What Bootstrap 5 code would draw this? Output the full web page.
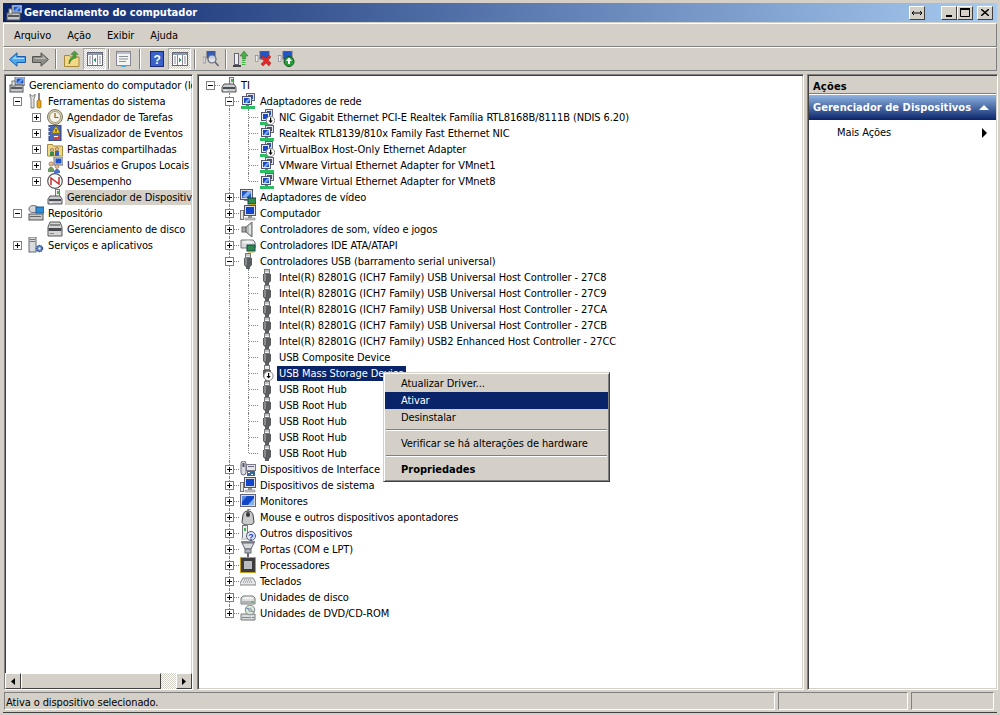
<!DOCTYPE html>
<html lang="pt-BR">
<head>
  <meta charset="UTF-8">
  <title>Gerenciamento do computador</title>
  <link href="https://cdn.jsdelivr.net/npm/bootstrap@5.3.3/dist/css/bootstrap.min.css" rel="stylesheet">
  <style>
    html, body { height: 715px; overflow: hidden; }
    body { background: #d4d0c8; color: #000; font: 11px/16px "DejaVu Sans", "Liberation Sans", sans-serif; font-stretch: condensed; letter-spacing: -.1px; }
    .win { width: 1000px; height: 715px; border: 3px solid #d4d0c8; border-bottom-width: 2px; box-shadow: inset 0 -1px 0 #404040; position: relative; }
    .titlebar { height: 19px; background: linear-gradient(90deg, #0a246a, #a6caf0); color: #fff; font-weight: 700; padding-left: 3px; letter-spacing: 0; }
    .titlebar svg.ic { margin-right: 2px; }
    .titlebar span { padding-top: 1px; }
    .cap { width: 16px; height: 14px; background: #d4d0c8; border: 1px solid; border-color: #fff #404040 #404040 #fff; padding: 0; display: flex; align-items: center; justify-content: center; }
    .bar { border: 1px solid; border-color: #fff #808080 #808080 #fff; }
    .menubar { height: 24px; margin-top: 1px; padding: 2px 0 0 5px; }
    .menubar span { padding: 0 5px; margin-right: 6px; }
    .toolbar { height: 24px; padding-left: 2px; }
    .tb { width: 23px; height: 22px; flex: none; display: flex; align-items: center; justify-content: center; }
    .tb.on { background: repeating-conic-gradient(#fff 0 25%, #d4d0c8 0 50%) 0 0 / 2px 2px; border: 1px solid; border-color: #a8a8a0 #fff #fff #a8a8a0; }
    .tsep { flex: none; display: flex; justify-content: center; }
    .tsep::before { content: ""; width: 2px; height: 20px; border-left: 1px solid #808080; border-right: 1px solid #fff; }
    .panes { margin-top: 3px; padding: 0 0 1px 1px; min-height: 0; }
    .pane { background: #fff; border: 1px solid; border-color: #808080 #fff #fff #808080; box-shadow: inset 1px 1px 0 #404040, inset -1px -1px 0 #d4d0c8; overflow: hidden; flex: none; }
    .p-left { width: 189px; margin-right: 4px; }
    .p-mid { width: 607px; margin-right: 3px; }
    .p-right { width: 191px; }
    .tree { padding: 2px 0 0 3px; overflow: hidden; min-height: 0; }
    .row-t { height: 16px; display: flex; align-items: center; white-space: nowrap; }
    .row-t svg.ic { margin-left: 1px; }
    .row-t span.tx { flex: none; margin-left: 2px; padding: 0 2px; height: 15px; line-height: 15px; }
    .row-t .sel { background: #0a246a; color: #fff; }
    .row-t .gray { background: #d4d0c8; flex: 1 0 auto; }
    .g { width: 19px; height: 16px; flex: none; position: relative; }
    .g.v::before, .g.t::before { content: ""; position: absolute; left: 9px; top: 0; bottom: 0; border-left: 1px dotted #808080; }
    .g.l::before { content: ""; position: absolute; left: 9px; top: 0; height: 8px; border-left: 1px dotted #808080; }
    .g.t::after, .g.l::after, .g.h::after { content: ""; position: absolute; left: 10px; right: 0; top: 8px; border-top: 1px dotted #808080; }
    .box { position: absolute; left: 5px; top: 4px; width: 9px; height: 9px; background: #fff; border: 1px solid #808080; z-index: 1; }
    .box::before { content: ""; position: absolute; left: 1px; top: 3px; width: 5px; height: 1px; background: #000; }
    .box.plus::after { content: ""; position: absolute; left: 3px; top: 1px; width: 1px; height: 5px; background: #000; }
    .hscroll { height: 16px; flex: none; background: #d4d0c8; }
    .sb { width: 16px; height: 16px; flex: none; background: #d4d0c8; border: 1px solid; border-color: #fff #404040 #404040 #fff; display: flex; align-items: center; justify-content: center; }
    .thumb { width: 140px; flex: none; border: 1px solid; border-color: #fff #404040 #404040 #fff; }
    .track { background: repeating-conic-gradient(#fff 0 25%, #d4d0c8 0 50%) 0 0 / 2px 2px; }
    .act-head { height: 18px; flex: none; background: #d4d0c8; font-weight: 700; padding: 3px 0 0 4px; line-height: 15px; border-bottom: 1px solid #808080; margin: 1px 1px 0 1px; letter-spacing: .2px; }
    .act-band { height: 25px; flex: none; margin: 1px 1px 0 1px; background: linear-gradient(#8fb4e2, #0a246a); color: #fff; font-weight: 700; padding: 0 7px 0 4px; letter-spacing: .05px; }
    .act-item { height: 24px; padding: 2px 10px 0 29px; }
    .tri-u { width: 0; height: 0; border: 5px solid transparent; border-top: 0; border-bottom-color: #fff; }
    .tri-r { width: 0; height: 0; border: 5px solid transparent; border-right: 0; border-left-color: #000; }
    .statusbar { height: 22px; padding: 1px 0 3px 1px; gap: 3px; }
    .cell { border: 1px solid; border-color: #808080 #fff #fff #808080; padding: 1px 0 0 1px; line-height: 18px; flex: none; }
    .ctx.dropdown-menu { left: 380px; top: 369px; width: 227px; min-width: 0; padding: 2px 1px 3px; margin: 0; font-size: 11px; color: #000; background: #d4d0c8; border: 1px solid; border-color: #d4d0c8 #404040 #404040 #d4d0c8; border-radius: 0; box-shadow: inset 1px 1px 0 #fff, inset -1px -1px 0 #808080; }
    .ctx .dropdown-item { height: 17px; padding: 1px 0 0 16px; line-height: 16px; color: #000; background: none; }
    .ctx .dropdown-item.active { background: #0a246a; color: #fff; }
    .ctx .dropdown-item.fw-bold { letter-spacing: 0; }
    .ctx .dropdown-divider { margin: 3px 1px 4px; height: 2px; border: 0; border-top: 1px solid #808080; border-bottom: 1px solid #fff; opacity: 1; }
  </style>
</head>
<body>

<svg class="d-none" xmlns="http://www.w3.org/2000/svg">
  <symbol id="mgmt" viewBox="0 0 16 16"><rect x="6" y="0" width="10" height="8" fill="#dfe3ea" stroke="#667"/><rect x="7.500" y="1.500" width="7" height="5" fill="#1f55c8"/><path d="M8 6l5-5h1v2l-3 3z" fill="#6aa0ee"/><rect x="1" y="8" width="13" height="7" fill="#c4c7c8" stroke="#555"/><rect x="2" y="10" width="11" height="2" fill="#55585a"/><rect x="3" y="4" width="3" height="5" fill="#e8e8e0" stroke="#777"/></symbol>
  <symbol id="dev" viewBox="0 0 16 16"><rect x="8.500" y=".5" width="4" height="8" fill="#eee" stroke="#777"/><rect x="10" y="2" width="2" height="3" fill="#4caf50"/><path d="M3 7h10l2 3v5H1v-5z" fill="#c9ccce" stroke="#555"/><rect x="2" y="10" width="12" height="2" fill="#4c4f52"/><rect x="3" y="13" width="3" height="1" fill="#eee"/></symbol>
  <symbol id="tools" viewBox="0 0 16 16"><path d="M2 1v3l1 1v10h3V5l1-1V1L5.500 3h-2z" fill="#e4e4e0" stroke="#666" stroke-width=".8"/><rect x="10" y="0" width="2" height="8" fill="#888"/><rect x="9" y="7" width="4" height="8" rx="1.500" fill="#e8a818" stroke="#8a5a00" stroke-width=".7"/></symbol>
  <symbol id="clock" viewBox="0 0 16 16"><circle cx="8" cy="8" r="7.500" fill="#d8cfae" stroke="#7d7660"/><circle cx="8" cy="8" r="5.500" fill="#f6f4ea" stroke="#a39c80"/><path d="M8 4v4.500h3.500" fill="none" stroke="#a05a10" stroke-width="1.200"/></symbol>
  <symbol id="evlog" viewBox="0 0 16 16"><rect x="2" y="0" width="12" height="16" fill="#4a68b8" stroke="#2a3a78"/><rect x="1" y="2" width="2" height="1" fill="#ddd"/><rect x="1" y="6" width="2" height="1" fill="#ddd"/><rect x="1" y="10" width="2" height="1" fill="#ddd"/><path d="M9 1l4 7H5z" fill="#f5d020" stroke="#8a6a00" stroke-width=".6"/><rect x="8.500" y="4" width="1" height="3" fill="#222"/><rect x="6" y="10" width="6" height="4" fill="#d04040"/><rect x="7" y="11" width="4" height="1" fill="#fff"/></symbol>
  <symbol id="share" viewBox="0 0 16 16"><path d="M.5 3.500h5l1 1.500h9v10H.5z" fill="#f0d888" stroke="#a58a3a"/><circle cx="5" cy="9" r="1.700" fill="#e8b888" stroke="#555" stroke-width=".5"/><rect x="3" y="11" width="4" height="4" fill="#3a8a48"/><circle cx="10" cy="8" r="1.700" fill="#e8b888" stroke="#555" stroke-width=".5"/><rect x="8" y="10" width="4" height="5" fill="#3a62b8"/></symbol>
  <symbol id="users" viewBox="0 0 16 16"><rect x="7" y="0" width="9" height="8" fill="#dfe3ea" stroke="#667"/><rect x="8.500" y="1.500" width="6" height="5" fill="#1f55c8"/><circle cx="4" cy="7" r="2.200" fill="#e8b888" stroke="#765" stroke-width=".5"/><path d="M1 15v-3l2-2h2l2 2v3z" fill="#6a9a58"/><circle cx="10" cy="9.500" r="2" fill="#e8b888" stroke="#765" stroke-width=".5"/><path d="M7 16v-2l2-2h2l2 2v2z" fill="#4a72c8"/></symbol>
  <symbol id="perf" viewBox="0 0 16 16"><circle cx="8" cy="8" r="7.300" fill="#fff" stroke="#555" stroke-width="1.200"/><path d="M4 12V5l8 6V4" fill="none" stroke="#c83030" stroke-width="1.500"/></symbol>
  <symbol id="store" viewBox="0 0 16 16"><ellipse cx="5.500" cy="4" rx="4.500" ry="3.500" fill="#d4d8d8" stroke="#667"/><rect x="8" y="2" width="8" height="6" fill="#2e8fd8" stroke="#1a5a90"/><rect x="1" y="9" width="14" height="6" fill="#c8cbcc" stroke="#555"/><rect x="2" y="11" width="11" height="1" fill="#666"/></symbol>
  <symbol id="disk" viewBox="0 0 16 16"><path d="M3 1h10l2 5v9H1V6z" fill="#d4d6d6" stroke="#555"/><rect x="3" y="3" width="10" height="2" fill="#888"/><rect x="1.500" y="7" width="13" height="3" fill="#47494c"/><rect x="3" y="12" width="4" height="1" fill="#4caf50"/></symbol>
  <symbol id="svc" viewBox="0 0 16 16"><rect x="1" y="0" width="7" height="15" fill="#d8dcdc" stroke="#667"/><rect x="2" y="2" width="5" height="1" fill="#777"/><rect x="2" y="4" width="5" height="1" fill="#777"/><circle cx="11.500" cy="11.500" r="3" fill="#6a94d0" stroke="#2e4f90" stroke-width="1.500" stroke-dasharray="1.500 .6"/><circle cx="11.500" cy="11.500" r="1" fill="#fff"/></symbol>
  <symbol id="net" viewBox="0 0 16 16"><rect x="6.500" y=".5" width="8" height="7" fill="#e0e4ee" stroke="#667"/><rect x="8" y="2" width="5" height="4" fill="#1f55c8"/><rect x="2.500" y="3.500" width="9" height="8" fill="#e8ecf4" stroke="#556"/><rect x="4" y="5" width="6" height="5" fill="#1a4ac0"/><path d="M5 9l4-4h1v2l-3 3H5z" fill="#78a8f0"/><rect x="6" y="12" width="3" height="1" fill="#28a848"/><rect x="1" y="13" width="14" height="3" fill="#28c060"/></symbol>
  <symbol id="netd" viewBox="0 0 16 16"><rect x="6.500" y=".5" width="7" height="7" fill="#e0e4ee" stroke="#667"/><rect x="8" y="2" width="4" height="4" fill="#1f55c8"/><rect x="2.500" y="3.500" width="8" height="8" fill="#e8ecf4" stroke="#556"/><rect x="4" y="5" width="5" height="5" fill="#1a4ac0"/><rect x="1" y="13" width="10" height="3" fill="#28c060"/><circle cx="11.500" cy="11.500" r="4.200" fill="#fff" stroke="#888"/><path d="M11 8.500h1.200v3h1.600l-2.200 2.600-2.200-2.600H11z" fill="#000"/></symbol>
  <symbol id="vid" viewBox="0 0 16 16"><rect x=".5" y=".5" width="12" height="10" fill="#d8dce0" stroke="#556"/><rect x="2" y="2" width="9" height="7" fill="#1f55c8"/><path d="M2 8l6-6h3v2l-5 5z" fill="#7fb0f0"/><rect x="4" y="11" width="5" height="1" fill="#889"/><rect x="8" y="9" width="8" height="6" fill="#2f8a4c" stroke="#144"/><rect x="9" y="15" width="6" height="1" fill="#c8a020"/></symbol>
  <symbol id="comp" viewBox="0 0 16 16"><rect x=".5" y="5.500" width="3" height="9" fill="#e8e8e0" stroke="#777"/><rect x="4.500" y=".5" width="11" height="10" fill="#d8dce0" stroke="#556"/><rect x="6" y="2" width="8" height="7" fill="#1246c8"/><rect x="8" y="11" width="4" height="2" fill="#999"/><rect x="5" y="13" width="10" height="2" fill="#c8ccd0" stroke="#777" stroke-width=".5"/></symbol>
  <symbol id="snd" viewBox="0 0 16 16"><rect x="2" y="6" width="4" height="5" fill="#aaa" stroke="#666"/><path d="M6 6l6-5v15l-6-5z" fill="#b8bcbc" stroke="#666"/><rect x="9" y="4" width="2" height="9" fill="#e0e2e2"/></symbol>
  <symbol id="ide" viewBox="0 0 16 16"><path d="M1 3h12l2 2v6H1z" fill="#d8dcdc" stroke="#777"/><ellipse cx="8" cy="5" rx="6" ry="1.500" fill="#eef0f0"/><rect x="7" y="8" width="8" height="6" fill="#2f8a4c" stroke="#144"/><rect x="8" y="14" width="6" height="1.500" fill="#c8a020"/></symbol>
  <symbol id="usb" viewBox="0 0 16 16"><rect x="5.500" y=".5" width="5" height="4" fill="#eee" stroke="#777"/><rect x="6.500" y="1.500" width="1" height="1" fill="#555"/><rect x="8.500" y="1.500" width="1" height="1" fill="#555"/><path d="M4 5h8v7l-2 2v2H6v-2l-2-2z" fill="#5b5e60"/><rect x="5" y="5" width="2" height="7" fill="#8a8d90"/></symbol>
  <symbol id="usbd" viewBox="0 0 16 16"><rect x="5.500" y=".5" width="5" height="4" fill="#eee" stroke="#777"/><path d="M4 5h8v7l-2 2v2H6v-2l-2-2z" fill="#5b5e60"/><circle cx="9.500" cy="11" r="4.600" fill="#fff" stroke="#888"/><path d="M9 8h1.200v3h1.600l-2.200 2.600L7.400 11H9z" fill="#000"/></symbol>
  <symbol id="hid" viewBox="0 0 16 16"><rect x="1" y="0" width="5" height="14" rx="2.500" fill="#d8dce0" stroke="#667"/><rect x="2.500" y="2" width="2" height="4" fill="#556"/><rect x="6.500" y="3.500" width="9" height="6" fill="#e4e6e8" stroke="#778"/><rect x="8" y="5" width="6" height="1" fill="#667"/><rect x="7" y="10" width="8" height="5" fill="#33689c"/><rect x="8" y="11" width="2" height="1" fill="#fff"/><rect x="11" y="13" width="2" height="1" fill="#fff"/></symbol>
  <symbol id="mon" viewBox="0 0 16 16"><rect x=".5" y="1.500" width="15" height="12" fill="#d8dce0" stroke="#667"/><rect x="2" y="3" width="12" height="9" fill="#1246c8"/><path d="M8 12l6-7v7z" fill="#7fb0f0"/><path d="M2 3h5l-5 6z" fill="#5a8ae8"/></symbol>
  <symbol id="mouse" viewBox="0 0 16 16"><path d="M3 6c0-2 2-4 5-4s5 2 5 4l1 7c0 2-3 3-6 3s-6-1-6-3z" fill="#c8cacc" stroke="#444"/><rect x="6" y="3" width="4" height="5" rx="2" fill="#3a3c3e"/><path d="M8 2V0h3" fill="none" stroke="#555"/></symbol>
  <symbol id="other" viewBox="0 0 16 16"><rect x="2.500" y=".5" width="5" height="13" fill="#e8ece8" stroke="#778"/><rect x="4" y="3" width="2" height="3" fill="#4caf50"/><rect x="1" y="13" width="9" height="2" fill="#d0d4d0"/><circle cx="11" cy="11" r="4.500" fill="#dfe8f8" stroke="#557"/><text x="11" y="14.500" font-size="9" font-weight="700" text-anchor="middle" fill="#2040b0" font-family="Liberation Sans">?</text></symbol>
  <symbol id="port" viewBox="0 0 16 16"><rect x="1" y="0" width="14" height="2" fill="#8a8e90"/><path d="M2 2h12l-3 6H5z" fill="#d8dcdc" stroke="#667"/><rect x="5" y="8" width="6" height="4" fill="#b0b4b8" stroke="#667"/><rect x="7" y="12" width="2" height="4" fill="#667"/></symbol>
  <symbol id="cpu" viewBox="0 0 16 16"><rect x="0" y="0" width="16" height="16" fill="#c8a020"/><rect x="1" y="1" width="14" height="14" fill="#3c3c3c"/><rect x="4" y="4" width="8" height="8" fill="#b8bcc0"/></symbol>
  <symbol id="kbd" viewBox="0 0 16 16"><path d="M3 5h10l3 5v2H0v-2z" fill="#e4e6e8" stroke="#888"/><path d="M4 7h8M3 9h10" stroke="#7a8088" stroke-dasharray="1 1"/></symbol>
  <symbol id="hdd" viewBox="0 0 16 16"><path d="M3 7h10l2 2v6H1V9z" fill="#d8dcdc" stroke="#777"/><ellipse cx="8" cy="9" rx="5.500" ry="1.200" fill="#f0f2f2"/><rect x="1.500" y="12" width="13" height="2.500" fill="#aeb2b4"/><rect x="11" y="12.500" width="3" height="1" fill="#3cb048"/></symbol>
  <symbol id="dvd" viewBox="0 0 16 16"><path d="M1 9h14v6H1z" fill="#d8dcdc" stroke="#777"/><rect x="2" y="12" width="9" height="1" fill="#888"/><rect x="12" y="12" width="2" height="1" fill="#3cb048"/><circle cx="10" cy="5" r="4.800" fill="#d4e8d4" stroke="#889"/><circle cx="10" cy="5" r="1.300" fill="#fff" stroke="#889"/><path d="M6 3l3 1M14 7l-3-1" stroke="#68a" /></symbol>
</svg>

<div class="win d-flex flex-column">
  <div class="titlebar d-flex align-items-center flex-none">
    <svg class="ic" width="16" height="16"><use href="#mgmt"/></svg>
    <span class="flex-grow-1">Gerenciamento do computador</span>
    <button class="cap" aria-label="Alternar"><svg width="10" height="6" viewBox="0 0 10 6"><path d="M0 3h10M2 1L0 3l2 2M8 1l2 2-2 2" fill="none" stroke="#000"/></svg></button>
    <button class="cap ms-3 me-0" aria-label="Minimizar"><svg width="8" height="8" viewBox="0 0 8 8"><rect x="1" y="6" width="6" height="2"/></svg></button>
    <button class="cap" aria-label="Maximizar"><svg width="10" height="9" viewBox="0 0 10 9"><path d="M.5 1.500h9v7h-9z" fill="none" stroke="#000"/><rect width="10" height="2"/></svg></button>
    <button class="cap ms-1 me-1" aria-label="Fechar"><svg width="8" height="7" viewBox="0 0 8 7"><path d="M0 0l8 7M8 0L0 7" stroke="#000" stroke-width="1.400"/></svg></button>
  </div>

  <div class="bar menubar d-flex align-items-center">
    <span>Arquivo</span><span>Ação</span><span>Exibir</span><span>Ajuda</span>
  </div>

  <div class="bar toolbar d-flex align-items-center">
    <div class="tb"><svg width="17" height="15" viewBox="0 0 17 15"><path d="M.5 7.500L8 .8v3.700h8.500v6H8v3.700z" fill="#4aa8ec" stroke="#1a5aa8"/><path d="M3 7.500l4-3.500v2h8v1H6z" fill="#a8dcff"/></svg></div>
    <div class="tb"><svg width="17" height="15" viewBox="0 0 17 15"><path d="M16.500 7.500L9 .8v3.700H.5v6H9v3.700z" fill="#8e8e88" stroke="#55554f"/><path d="M3 6h8V4l3 3H3z" fill="#c0c0b8"/></svg></div>
    <div class="tsep" style="width:8px"></div>
    <div class="tb"><svg width="16" height="16" viewBox="0 0 16 16"><path d="M.5 4.500h5l1 1.500h8.500v9.500H.5z" fill="#f4d888" stroke="#a58a3a"/><path d="M5 13c0-4 1-6 4-7V3l-2 .5L10.500 0 14 3.500 12 3v4c-3 0-5 2-7 6z" fill="#48a838" stroke="#2a7020" stroke-width=".6"/></svg></div>
    <div class="tb on"><svg width="16" height="14" viewBox="0 0 16 14"><rect x=".5" y=".5" width="15" height="13" fill="#fff" stroke="#667"/><rect x="1" y="1" width="14" height="2" fill="#8a9ab0"/><path d="M5.500 3v10M10.500 3v10" stroke="#889"/><path d="M2 5h2M2 7h2M2 9h2M2 11h2M12 5h2M12 7h2M12 9h2M12 11h2" stroke="#889"/><path d="M9 5.500v5L6.500 8z" fill="#18a058"/></svg></div>
    <div class="tsep" style="width:6px"></div>
    <div class="tb"><svg width="15" height="16" viewBox="0 0 15 16"><rect x=".5" y=".5" width="14" height="14" fill="#f4f4f0" stroke="#889"/><rect x="1" y="1" width="13" height="2" fill="#b8c0cc"/><path d="M3 5.500h9M3 8h9M3 10.500h7" stroke="#8a8f98"/><rect x="5" y="14" width="5" height="2" fill="#48a8e8"/></svg></div>
    <div class="tsep" style="width:10px"></div>
    <div class="tb"><svg width="14" height="16" viewBox="0 0 14 16"><rect x=".5" y=".5" width="13" height="15" fill="#3a62c8" stroke="#1a2a78"/><text x="7" y="12.500" font-size="12" font-weight="700" text-anchor="middle" fill="#fff" font-family="Liberation Sans">?</text></svg></div>
    <div class="tb on"><svg width="16" height="14" viewBox="0 0 16 14"><rect x=".5" y=".5" width="15" height="13" fill="#fff" stroke="#667"/><rect x="1" y="1" width="14" height="2" fill="#8a9ab0"/><path d="M5.500 3v10M10.500 3v10" stroke="#889"/><path d="M2 5h2M2 7h2M2 9h2M2 11h2M12 5h2M12 7h2M12 9h2M12 11h2" stroke="#889"/><path d="M7 5.500v5L9.500 8z" fill="#18a058"/></svg></div>
    <div class="tsep" style="width:8px"></div>
    <div class="tb"><svg width="16" height="16" viewBox="0 0 16 16"><rect x="0" y="6" width="2.500" height="6" fill="#d8dce0" stroke="#778" stroke-width=".6"/><rect x="4" y="0" width="8" height="7" fill="#2f5cc0" stroke="#556"/><circle cx="9" cy="8" r="4" fill="#dfe8f4" fill-opacity=".8" stroke="#667" stroke-width="1.200"/><path d="M12 11l3.500 4" stroke="#667" stroke-width="1.600"/></svg></div>
    <div class="tsep" style="width:7px"></div>
    <div class="tb"><svg width="15" height="16" viewBox="0 0 15 16"><rect x="1.500" y="2.500" width="4" height="11" fill="#eee" stroke="#667"/><path d="M0 14h8v2H0z" fill="#444"/><path d="M11 0l4 5h-2.500v3h-3V5H7z" fill="#48b048" stroke="#207020" stroke-width=".5"/><path d="M9 9.500h3.500M9 11.500h3.500M9 13.500h3.500" stroke="#48b048" stroke-width="1.200"/></svg></div>
    <div class="tb"><svg width="17" height="16" viewBox="0 0 17 16"><rect x="0.500" y="4.500" width="2.500" height="6" fill="#eee" stroke="#778" stroke-width=".6"/><rect x="5" y="0" width="9" height="8" fill="#1f55c8" stroke="#667"/><path d="M6 6l2-1 3 2 3-3 2 2-3 3 3 3-2 3-3-3-3 3-2-2 3-3z" fill="#e02828" stroke="#901010" stroke-width=".4"/></svg></div>
    <div class="tb"><svg width="17" height="16" viewBox="0 0 17 16"><rect x="0.500" y="4.500" width="2.500" height="6" fill="#eee" stroke="#778" stroke-width=".6"/><rect x="5" y="0" width="9" height="8" fill="#1f55c8" stroke="#667"/><circle cx="11" cy="10.500" r="5" fill="#28a038" stroke="#105020"/><path d="M11 6.500l3 3.500h-2v3h-2v-3H8z" fill="#fff"/></svg></div>
  </div>

  <div class="panes d-flex flex-grow-1">
    <div class="pane p-left d-flex flex-column">
      <div class="tree flex-grow-1" id="leftTree"></div>
      <div class="hscroll d-flex">
        <div class="sb"><svg width="4" height="7" viewBox="0 0 4 7"><path d="M4 0v7L0 3.500z"/></svg></div>
        <div class="thumb"></div>
        <div class="track flex-grow-1"></div>
        <div class="sb"><svg width="4" height="7" viewBox="0 0 4 7"><path d="M0 0v7l4-3.500z"/></svg></div>
      </div>
    </div>
    <div class="pane p-mid d-flex flex-column">
      <div class="tree flex-grow-1" id="midTree"></div>
    </div>
    <div class="pane p-right d-flex flex-column">
      <div class="act-head">Ações</div>
      <div class="act-band d-flex align-items-center justify-content-between"><span>Gerenciador de Dispositivos</span><i class="tri-u"></i></div>
      <div class="act-item d-flex align-items-center justify-content-between"><span>Mais Ações</span><i class="tri-r"></i></div>
    </div>
  </div>

  <div class="statusbar d-flex">
    <div class="cell" style="width:771px">Ativa o dispositivo selecionado.</div>
    <div class="cell" style="width:130px"></div>
    <div class="cell" style="width:83px"></div>
  </div>

  <ul class="dropdown-menu show ctx list-unstyled">
    <li><span class="dropdown-item">Atualizar Driver...</span></li>
    <li><span class="dropdown-item active">Ativar</span></li>
    <li><span class="dropdown-item">Desinstalar</span></li>
    <li><hr class="dropdown-divider"></li>
    <li><span class="dropdown-item">Verificar se há alterações de hardware</span></li>
    <li><hr class="dropdown-divider"></li>
    <li><span class="dropdown-item fw-bold">Propriedades</span></li>
  </ul>
</div>

<script>
  // guide cells per row: - blank, v through, t tee, l last, m/p tee with minus/plus, P last with plus, M root, n box only
  const left = [
    ["", "mgmt", "Gerenciamento do computador (local)"],
    ["n", "tools", "Ferramentas do sistema"],
    ["-p", "clock", "Agendador de Tarefas"],
    ["-p", "evlog", "Visualizador de Eventos"],
    ["-p", "share", "Pastas compartilhadas"],
    ["-p", "users", "Usuários e Grupos Locais"],
    ["-p", "perf", "Desempenho"],
    ["--", "dev", "Gerenciador de Dispositivos", "gray"],
    ["n", "store", "Repositório"],
    ["--", "disk", "Gerenciamento de disco"],
    ["P", "svc", "Serviços e aplicativos"]
  ];
  const intel = t => "Intel(R) 82801G (ICH7 Family) " + t;
  const mid = [
    ["M", "dev", "TI"],
    ["-m", "net", "Adaptadores de rede"],
    ["-vt", "netd", "NIC Gigabit Ethernet PCI-E Realtek Família RTL8168B/8111B (NDIS 6.20)"],
    ["-vt", "net", "Realtek RTL8139/810x Family Fast Ethernet NIC"],
    ["-vt", "netd", "VirtualBox Host-Only Ethernet Adapter"],
    ["-vt", "net", "VMware Virtual Ethernet Adapter for VMnet1"],
    ["-vl", "net", "VMware Virtual Ethernet Adapter for VMnet8"],
    ["-p", "vid", "Adaptadores de vídeo"],
    ["-p", "comp", "Computador"],
    ["-p", "snd", "Controladores de som, vídeo e jogos"],
    ["-p", "ide", "Controladores IDE ATA/ATAPI"],
    ["-m", "usb", "Controladores USB (barramento serial universal)"],
    ["-vt", "usb", intel("USB Universal Host Controller - 27C8")],
    ["-vt", "usb", intel("USB Universal Host Controller - 27C9")],
    ["-vt", "usb", intel("USB Universal Host Controller - 27CA")],
    ["-vt", "usb", intel("USB Universal Host Controller - 27CB")],
    ["-vt", "usb", intel("USB2 Enhanced Host Controller - 27CC")],
    ["-vt", "usb", "USB Composite Device"],
    ["-vt", "usbd", "USB Mass Storage Device", "sel"],
    ["-vt", "usb", "USB Root Hub"],
    ["-vt", "usb", "USB Root Hub"],
    ["-vt", "usb", "USB Root Hub"],
    ["-vt", "usb", "USB Root Hub"],
    ["-vl", "usb", "USB Root Hub"],
    ["-p", "hid", "Dispositivos de Interface Humana"],
    ["-p", "comp", "Dispositivos de sistema"],
    ["-p", "mon", "Monitores"],
    ["-p", "mouse", "Mouse e outros dispositivos apontadores"],
    ["-p", "other", "Outros dispositivos"],
    ["-p", "port", "Portas (COM e LPT)"],
    ["-p", "cpu", "Processadores"],
    ["-p", "kbd", "Teclados"],
    ["-p", "hdd", "Unidades de disco"],
    ["-P", "dvd", "Unidades de DVD/CD-ROM"]
  ];
  const cells = {
    "-": '<i class="g"></i>', v: '<i class="g v"></i>', t: '<i class="g t"></i>', l: '<i class="g l"></i>',
    m: '<i class="g t"><b class="box"></b></i>', p: '<i class="g t"><b class="box plus"></b></i>',
    P: '<i class="g l"><b class="box plus"></b></i>', M: '<i class="g h"><b class="box"></b></i>'
  };
  const plain = { p: '<i class="g"><b class="box plus"></b></i>', P: '<i class="g"><b class="box plus"></b></i>', n: '<i class="g"><b class="box"></b></i>', "-": '<i class="g"></i>' };
  function fill(id, rows, map) {
    document.getElementById(id).innerHTML = rows.map(([g, ic, txt, cls]) =>
      `<div class="row-t">${[...g].map(c => map[c]).join("")}<svg class="ic flex-shrink-0" width="16" height="16"><use href="#${ic}"/></svg><span class="tx ${cls || ""}">${txt}</span></div>`
    ).join("");
  }
  fill("leftTree", left, plain);
  fill("midTree", mid, cells);
</script>
</body>
</html>
